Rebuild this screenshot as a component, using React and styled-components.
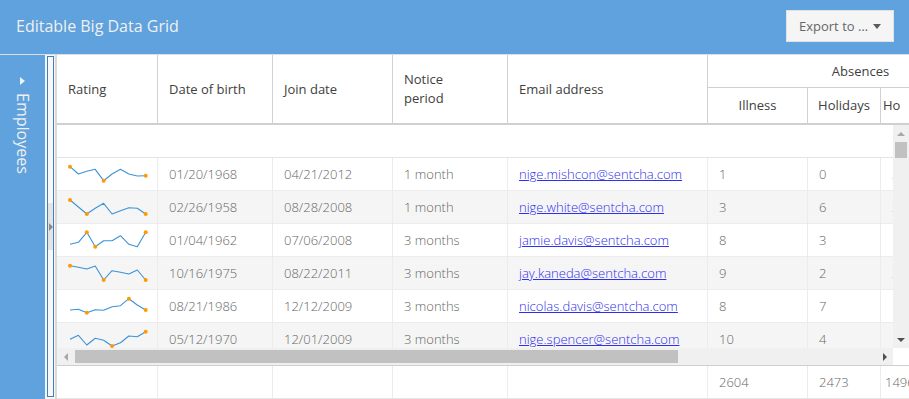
import React from 'react';
import styled, { createGlobalStyle } from 'styled-components';

const GlobalStyle = createGlobalStyle`
  html, body { margin: 0; padding: 0; background: #fff; }
  body { font-family: "Open Sans", "Noto Sans", sans-serif; }
  *, *::before, *::after { box-sizing: border-box; }
`;

const COLS = '101px 115px 120px 115px 200px 100px 73px 133px';

const Page = styled.div`
  width: 909px;
  height: 399px;
  display: flex;
  flex-direction: column;
  overflow: hidden;
`;

const TitleBar = styled.header`
  height: 55px;
  flex: none;
  background: #5fa2dd;
  border-bottom: 1px solid #d9dfe6;
  display: flex;
  align-items: center;
  justify-content: space-between;
  padding: 0 15px 2px 16px;
`;

const Title = styled.h1`
  margin: 0;
  font-size: 16px;
  font-weight: 400;
  line-height: 20px;
  color: #f0f0f0;
`;

const ExportButton = styled.button`
  width: 108px;
  height: 32px;
  background: #f5f5f5;
  border: 1px solid #e1e1e1;
  padding: 0 12px 0 12px;
  display: flex;
  align-items: center;
  justify-content: space-between;
  font-family: inherit;
  font-size: 13px;
  color: #666;
  cursor: pointer;
`;

const Caret = styled.span`
  width: 0;
  height: 0;
  border-left: 4px solid transparent;
  border-right: 4px solid transparent;
  border-top: 5px solid #5c5c5c;
`;

const Main = styled.div`
  flex: 1;
  display: flex;
  min-height: 0;
`;

const SidePanel = styled.aside`
  width: 45px;
  flex: none;
  background: #5fa2dd;
  display: flex;
  flex-direction: column;
  align-items: center;
  padding-top: 22px;
`;

const ExpandArrow = styled.span`
  width: 0;
  height: 0;
  border-top: 4px solid transparent;
  border-bottom: 4px solid transparent;
  border-left: 5px solid #eef3f9;
`;

const SideTitle = styled.span`
  margin-top: 8px;
  writing-mode: vertical-rl;
  font-size: 16px;
  line-height: 20px;
  color: #f0f0f0;
`;

const Splitter = styled.div`
  width: 12px;
  flex: none;
  background: #f6f6f6;
  padding: 1px 1px 2px 2px;
  border-right: 2px solid #d9d9d9;
  display: flex;
`;

const SplitBox = styled.div`
  flex: 1;
  border: 1px solid #3d7fc1;
  background: #f8f8f8;
  display: flex;
  align-items: center;
`;

const CollapseTool = styled.div`
  width: 100%;
  height: 47px;
  background: #e4e4e4;
  display: flex;
  align-items: center;
  justify-content: center;
`;

const CollapseArrow = styled.span`
  width: 0;
  height: 0;
  border-top: 4px solid transparent;
  border-bottom: 4px solid transparent;
  border-left: 4px solid #8a8a8a;
`;

const Grid = styled.section`
  width: 852px;
  flex: none;
  display: flex;
  flex-direction: column;
  overflow: hidden;
  background: #fff;
`;

const HeaderWrap = styled.div`
  overflow: hidden;
  flex: none;
`;

const Header = styled.div`
  display: grid;
  grid-template-columns: ${COLS};
  grid-template-rows: 33px 35px;
  border-bottom: 2px solid #d0d0d0;
  width: max-content;
`;

const HeaderCell = styled.div`
  grid-row: ${p => p.$row};
  grid-column: ${p => p.$col};
  display: flex;
  align-items: center;
  justify-content: ${p => (p.$center ? 'center' : 'flex-start')};
  padding: 0 ${p => (p.$center ? 0 : p.$pad ?? 11)}px;
  border-right: 1px solid #d0d0d0;
  border-bottom: ${p => (p.$group ? '1px solid #d0d0d0' : 'none')};
  font-size: 13px;
  line-height: 19px;
  color: #404040;
  white-space: nowrap;
  overflow: hidden;
`;

const BodyArea = styled.div`
  height: 223px;
  flex: none;
  display: flex;
`;

const Viewport = styled.div`
  width: 836px;
  overflow: hidden;
`;

const EmptyRow = styled.div`
  width: 957px;
  height: 33px;
  border-bottom: 1px solid #e4e4e4;
  background: #fff;
`;

const DataRow = styled.div`
  display: grid;
  grid-template-columns: ${COLS};
  height: 33px;
  border-bottom: 1px solid #ececec;
  background: ${p => (p.$alt ? '#f5f5f5' : '#fff')};
  width: max-content;
`;

const Cell = styled.div`
  display: flex;
  align-items: center;
  padding: 0 0 0 ${p => p.$pad ?? 11}px;
  border-right: 1px solid #ececec;
  font-size: 13px;
  font-weight: 300;
  color: #666;
  white-space: nowrap;
  overflow: hidden;
`;

const EmailLink = styled.a`
  color: #2f2fee;
  text-decoration: underline;
`;

const SparkSvg = styled.svg`
  display: block;
`;

const VScroll = styled.div`
  width: 16px;
  flex: none;
  background: #f0f0f0;
  display: flex;
  flex-direction: column;
  align-items: center;
`;

const ArrowBox = styled.div`
  width: ${p => (p.$h ? 17 : 16)}px;
  height: 17px;
  flex: none;
  display: flex;
  align-items: center;
  justify-content: center;
`;

const UpTri = styled.span`
  width: 0; height: 0;
  border-left: 4px solid transparent;
  border-right: 4px solid transparent;
  border-bottom: 4px solid ${p => p.$c};
`;
const DownTri = styled.span`
  width: 0; height: 0;
  border-left: 4px solid transparent;
  border-right: 4px solid transparent;
  border-top: 4px solid ${p => p.$c};
`;
const LeftTri = styled.span`
  width: 0; height: 0;
  border-top: 4px solid transparent;
  border-bottom: 4px solid transparent;
  border-right: 4px solid ${p => p.$c};
`;
const RightTri = styled.span`
  width: 0; height: 0;
  border-top: 4px solid transparent;
  border-bottom: 4px solid transparent;
  border-left: 4px solid ${p => p.$c};
`;

const VThumb = styled.div`
  width: 12px;
  height: 16px;
  background: #c1c1c1;
`;

const Spacer = styled.div`
  flex: 1;
`;

const HScrollRow = styled.div`
  height: 17px;
  flex: none;
  display: flex;
`;

const HTrack = styled.div`
  width: 836px;
  background: #f0f0f0;
  display: flex;
  align-items: center;
`;

const HThumb = styled.div`
  width: 603px;
  height: 13px;
  margin-left: 1px;
  background: #c1c1c1;
`;

const Corner = styled.div`
  width: 16px;
  background: #fff;
`;

const SummaryRow = styled.div`
  display: grid;
  grid-template-columns: ${COLS};
  height: 34px;
  flex: none;
  border-top: 1px solid #cfcfcf;
  border-bottom: 1px solid #e6e6e6;
  width: max-content;
`;

const SPARK = [
  [9.7, 17, 14.3, 12.3, 23.7, 17, 12.3, 17, 19, 18.7],
  [10, 17, 24, 18.3, 13.3, 24, 20.7, 17.7, 18.3, 24],
  [21.3, 19.3, 9.3, 23.7, 17.7, 17.7, 12.7, 21.3, 23.7, 9.3],
  [9.7, 11.3, 13, 10, 24, 14.7, 16.3, 18, 14, 24],
  [21, 20.3, 23.7, 20.7, 21.3, 17.7, 16.7, 9.7, 16, 21],
  [17.3, 13.3, 23, 16.3, 18.3, 24, 20.7, 14, 14.7, 9.7],
];

const ROWS = [
  ['01/20/1968', '04/21/2012', '1 month', 'nige.mishcon@sentcha.com', '1', '0', '2'],
  ['02/26/1958', '08/28/2008', '1 month', 'nige.white@sentcha.com', '3', '6', '2'],
  ['01/04/1962', '07/06/2008', '3 months', 'jamie.davis@sentcha.com', '8', '3', '1'],
  ['10/16/1975', '08/22/2011', '3 months', 'jay.kaneda@sentcha.com', '9', '2', '2'],
  ['08/21/1986', '12/12/2009', '3 months', 'nicolas.davis@sentcha.com', '8', '7', '1'],
  ['05/12/1970', '12/01/2009', '3 months', 'nige.spencer@sentcha.com', '10', '4', '1'],
];

function Sparkline({ values }) {
  const xs = values.map((_, i) => 2 + i * 8.41);
  const ys = values.map(v => v - 1);
  let hi = 0;
  let lo = 0;
  values.forEach((v, i) => {
    if (v < values[hi]) hi = i;
    if (v > values[lo]) lo = i;
  });
  const marks = Array.from(new Set([hi, lo, values.length - 1]));
  const pts = xs.map((x, i) => `${x},${ys[i]}`).join(' ');
  return (
    <SparkSvg width="84" height="32" viewBox="0 0 84 32">
      <polyline points={pts} fill="none" stroke="#3c93d6" strokeWidth="1.1" strokeLinejoin="round" />
      {marks.map(i => (
        <circle key={i} cx={xs[i]} cy={ys[i]} r="2" fill="#ff9a00" />
      ))}
    </SparkSvg>
  );
}

export default function App() {
  return (
    <Page>
      <GlobalStyle />
      <TitleBar>
        <Title>Editable Big Data Grid</Title>
        <ExportButton>
          Export to …
          <Caret />
        </ExportButton>
      </TitleBar>
      <Main>
        <SidePanel>
          <ExpandArrow />
          <SideTitle>Employees</SideTitle>
        </SidePanel>
        <Splitter>
          <SplitBox>
            <CollapseTool>
              <CollapseArrow />
            </CollapseTool>
          </SplitBox>
        </Splitter>
        <Grid>
          <HeaderWrap>
            <Header>
              <HeaderCell $row="1 / 3" $col="1">Rating</HeaderCell>
              <HeaderCell $row="1 / 3" $col="2">Date of birth</HeaderCell>
              <HeaderCell $row="1 / 3" $col="3">Join date</HeaderCell>
              <HeaderCell $row="1 / 3" $col="4">Notice<br />period</HeaderCell>
              <HeaderCell $row="1 / 3" $col="5">Email address</HeaderCell>
              <HeaderCell $row="1" $col="6 / 9" $center $group>Absences</HeaderCell>
              <HeaderCell $row="2" $col="6" $center>Illness</HeaderCell>
              <HeaderCell $row="2" $col="7" $center>Holidays</HeaderCell>
              <HeaderCell $row="2" $col="8" $pad={2}>Ho</HeaderCell>
            </Header>
          </HeaderWrap>
          <BodyArea>
            <Viewport>
              <EmptyRow />
              {ROWS.map((r, i) => (
                <DataRow key={i} $alt={i % 2 === 1}>
                  <Cell>
                    <Sparkline values={SPARK[i]} />
                  </Cell>
                  <Cell>{r[0]}</Cell>
                  <Cell>{r[1]}</Cell>
                  <Cell>{r[2]}</Cell>
                  <Cell>
                    <EmailLink href="#">{r[3]}</EmailLink>
                  </Cell>
                  <Cell>{r[4]}</Cell>
                  <Cell>{r[5]}</Cell>
                  <Cell>{r[6]}</Cell>
                </DataRow>
              ))}
            </Viewport>
            <VScroll>
              <ArrowBox>
                <UpTri $c="#a8a8a8" />
              </ArrowBox>
              <VThumb />
              <Spacer />
              <ArrowBox>
                <DownTri $c="#505050" />
              </ArrowBox>
            </VScroll>
          </BodyArea>
          <HScrollRow>
            <HTrack>
              <ArrowBox $h>
                <LeftTri $c="#a8a8a8" />
              </ArrowBox>
              <HThumb />
              <Spacer />
              <ArrowBox $h>
                <RightTri $c="#505050" />
              </ArrowBox>
            </HTrack>
            <Corner />
          </HScrollRow>
          <SummaryRow>
            <Cell />
            <Cell />
            <Cell />
            <Cell />
            <Cell />
            <Cell>2604</Cell>
            <Cell>2473</Cell>
            <Cell $pad={4}>1496</Cell>
          </SummaryRow>
        </Grid>
      </Main>
    </Page>
  );
}
